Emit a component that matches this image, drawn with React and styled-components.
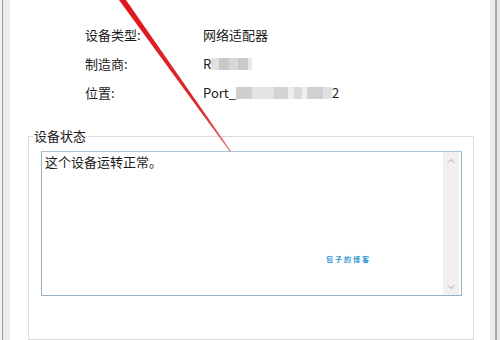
import React from "react";
import styled, { createGlobalStyle } from "styled-components";

const GlobalStyle = createGlobalStyle`
  html, body {
    margin: 0;
    padding: 0;
    background: #ffffff;
  }
  body {
    font-family: "Noto Sans CJK SC", "Noto Sans", sans-serif;
    color: #1b1b1b;
  }
`;

const Page = styled.div`
  position: relative;
  width: 500px;
  height: 340px;
  overflow: hidden;
  display: flex;
  flex-direction: row;
  background: #ffffff;
`;

const Edge = styled.div`
  width: 10px;
  flex: none;
  display: flex;
  flex-direction: row;
  background: #eeeeee;
`;

const EdgeLine = styled.div`
  width: ${(p) => p.w}px;
  background: ${(p) => p.c};
`;

const Content = styled.div`
  flex: 1;
  display: flex;
  flex-direction: column;
  background: #ffffff;
`;

const InfoList = styled.div`
  padding: 20px 0 0 75px;
  display: flex;
  flex-direction: column;
`;

const InfoRow = styled.div`
  height: 29px;
  display: flex;
  flex-direction: row;
  align-items: center;
  font-size: 13px;
`;

const Label = styled.div`
  width: 118px;
  flex: none;
`;

const Value = styled.div`
  display: flex;
  align-items: center;
`;

const Blur = styled.span`
  display: inline-block;
  width: ${(p) => p.w}px;
  height: ${(p) => p.h || 12}px;
  background: ${(p) => p.c};
  filter: blur(0.6px);
`;

const Group = styled.fieldset`
  margin: 21px 16px 0 18px;
  padding: 0 11px 0 4px;
  border: 1px solid #dcdcdc;
  height: 240px;
  min-width: 0;
`;

const Legend = styled.legend`
  padding: 0 1px;
  font-size: 13px;
  line-height: 16px;
`;

const TextBox = styled.div`
  position: relative;
  margin: 7px 0 0 8px;
  height: 143px;
  display: flex;
  flex-direction: row;
  border: 1px solid #94b3c7;
  border-top-color: #a9c6d8;
  background: #ffffff;
`;

const TextArea = styled.div`
  flex: 1;
  padding: 1px 3px;
  font-size: 13px;
  line-height: 18px;
`;

const Scrollbar = styled.div`
  width: 16px;
  margin-right: 2px;
  display: flex;
  flex-direction: column;
  justify-content: space-between;
  align-items: center;
  background: #f0f0f0;
  padding: 6px 0 5px;
`;

const Watermark = styled.div`
  position: absolute;
  left: 284px;
  top: 102px;
  font-size: 7px;
  letter-spacing: 2px;
  color: #2f95d6;
  font-weight: bold;
`;

const Arrow = styled.svg`
  position: absolute;
  left: 0;
  top: 0;
  pointer-events: none;
`;

function Chevron({ up }) {
  return (
    <svg width="8" height="5" viewBox="0 0 8 5">
      <path
        d={up ? "M1 4.5 L4 1.5 L7 4.5" : "M1 0.5 L4 3.5 L7 0.5"}
        fill="none"
        stroke="#a6a6a6"
        strokeWidth="1"
      />
    </svg>
  );
}

export default function App() {
  return (
    <>
      <GlobalStyle />
      <Page>
        <Edge>
          <EdgeLine w={2} c="#f3f3f3" />
          <EdgeLine w={1} c="#9a9a9a" />
          <EdgeLine w={7} c="#ececec" />
        </Edge>
        <Content>
          <InfoList>
            <InfoRow>
              <Label>设备类型:</Label>
              <Value>网络适配器</Value>
            </InfoRow>
            <InfoRow>
              <Label>制造商:</Label>
              <Value>
                R
                <Blur w={8} c="#e2e2e2" />
                <Blur w={10} c="#c9c9c9" />
                <Blur w={9} c="#d9d9d9" />
                <Blur w={10} c="#cacaca" />
                <Blur w={4} c="#e8e8e8" />
              </Value>
            </InfoRow>
            <InfoRow>
              <Label>位置:</Label>
              <Value>
                Port_
                <Blur w={16} c="#cfcfcf" />
                <Blur w={22} c="#e4e4e4" />
                <Blur w={14} c="#d3d3d3" />
                <Blur w={6} c="#eeeeee" />
                <Blur w={8} c="#dadada" />
                <Blur w={5} c="#efefef" />
                <Blur w={16} c="#d0d0d0" />
                <Blur w={9} c="#e1e1e1" />
                2
              </Value>
            </InfoRow>
          </InfoList>
          <Group>
            <Legend>设备状态</Legend>
            <TextBox>
              <TextArea>这个设备运转正常。</TextArea>
              <Scrollbar>
                <Chevron up />
                <Chevron />
              </Scrollbar>
              <Watermark>包子的博客</Watermark>
            </TextBox>
          </Group>
        </Content>
        <Edge>
          <EdgeLine w={5} c="#ececec" />
          <EdgeLine w={2} c="#a8a8a8" />
          <EdgeLine w={3} c="#e6e6e6" />
        </Edge>
        <Arrow width="500" height="340" viewBox="0 0 500 340">
          <defs>
            <linearGradient id="red" x1="0" y1="0" x2="0" y2="1">
              <stop offset="0" stopColor="#e0161b" />
              <stop offset="0.75" stopColor="#dc2a2e" />
              <stop offset="1" stopColor="#e58a8c" />
            </linearGradient>
          </defs>
          <polygon points="119,0 126,0 231,151 230,152" fill="url(#red)" />
        </Arrow>
      </Page>
    </>
  );
}
